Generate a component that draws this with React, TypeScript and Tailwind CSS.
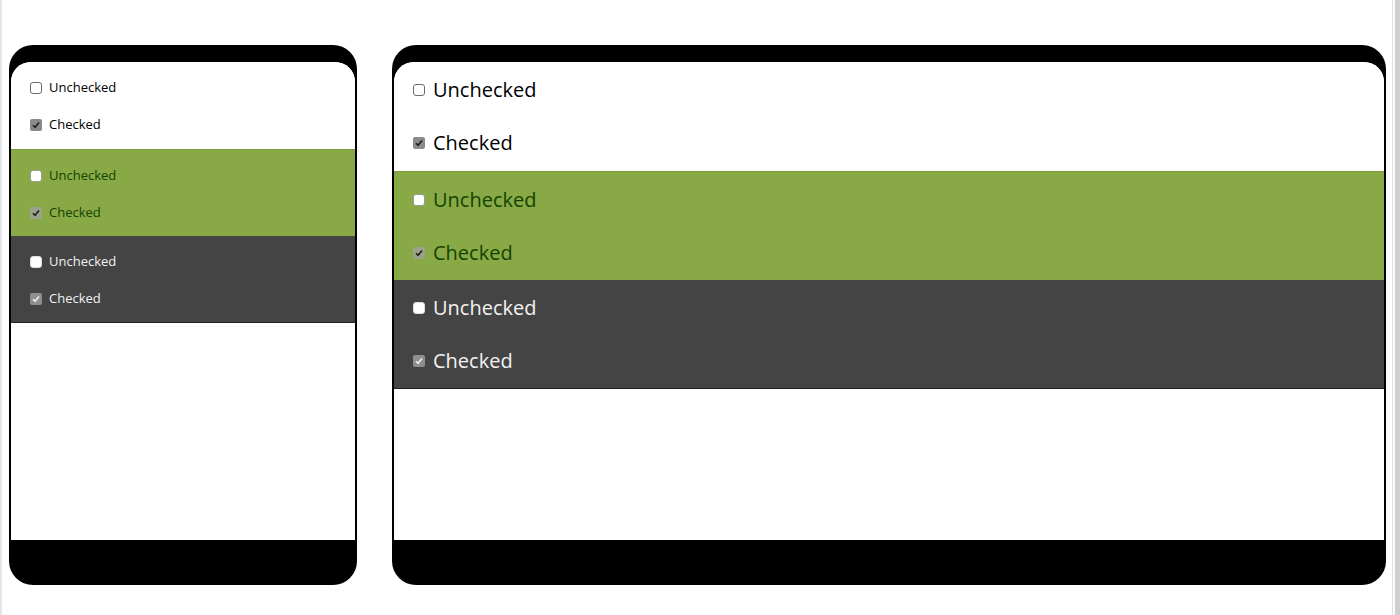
import React from 'react';

type Tone = 'light' | 'green' | 'dark';

const sectionBg: Record<Tone, string> = {
  light: 'bg-white text-black',
  green: 'bg-[#89a946] text-[#124400] border-t border-[#7c9a3c]',
  dark: 'bg-[#444444] text-[#f2f2f2] border-b border-[#222222]',
};

function Box({ tone, checked }: { tone: Tone; checked: boolean }) {
  if (!checked) {
    const cls =
      tone === 'light'
        ? 'bg-white border border-[#6b6b6b]'
        : tone === 'green'
        ? 'bg-white border border-[#9a9a9a]'
        : 'bg-white border border-[#dddddd]';
    return <span className={`inline-block w-[12px] h-[12px] rounded-[3px] shrink-0 ${cls}`} />;
  }
  const fill = tone === 'green' ? 'bg-[#9aa389]' : tone === 'dark' ? 'bg-[#8f8f8f]' : 'bg-[#8a8a8a]';
  const stroke = tone === 'dark' ? '#eeeeee' : '#1e1e1e';
  return (
    <span className={`inline-flex items-center justify-center w-[12px] h-[12px] rounded-[2px] shrink-0 ${fill}`}>
      <svg width="10" height="10" viewBox="0 0 10 10">
        <polyline points="2,5.2 4.1,7.3 8,2.6" fill="none" stroke={stroke} strokeWidth="1.6" />
      </svg>
    </span>
  );
}

function Section({ tone, big }: { tone: Tone; big: boolean }) {
  const rowCls = big ? 'h-[53px] text-[20px] gap-[8px]' : 'h-[37px] text-[13px] gap-[7px]';
  const boxCls = big ? 'h-[109px] pt-[1px]' : 'h-[87px] pt-[7px]';
  return (
    <div className={`flex flex-col pl-[19px] ${boxCls} ${sectionBg[tone]}`}>
      <label className={`flex items-center ${rowCls}`}>
        <Box tone={tone} checked={false} />
        <span>Unchecked</span>
      </label>
      <label className={`flex items-center ${rowCls}`}>
        <Box tone={tone} checked />
        <span>Checked</span>
      </label>
    </div>
  );
}

function Device({ width, big }: { width: string; big: boolean }) {
  return (
    <div className={`${width} h-[540px] bg-black rounded-[24px] pt-[17px] px-[2px] pb-[45px] flex flex-col`}>
      <div className="flex-1 bg-white rounded-t-[20px] overflow-hidden flex flex-col">
        <Section tone="light" big={big} />
        <Section tone="green" big={big} />
        <Section tone="dark" big={big} />
      </div>
    </div>
  );
}

export default function App() {
  return (
    <div
      className="w-[1400px] h-[615px] bg-white flex border-l-[2px] border-[#e4e4ee]"
      style={{ fontFamily: '"Open Sans", "Noto Sans", sans-serif' }}
    >
      <div className="flex gap-[35px] pt-[45px] pl-[7px]">
        <Device width="w-[348px]" big={false} />
        <Device width="w-[994px]" big />
      </div>
      <div className="ml-auto h-full w-[8px] flex">
        <div className="w-[3px] h-full bg-[#fafafa] border-l border-[#e2e2e2]" />
        <div className="flex-1 h-full bg-[#cfcfcf]" />
      </div>
    </div>
  );
}
